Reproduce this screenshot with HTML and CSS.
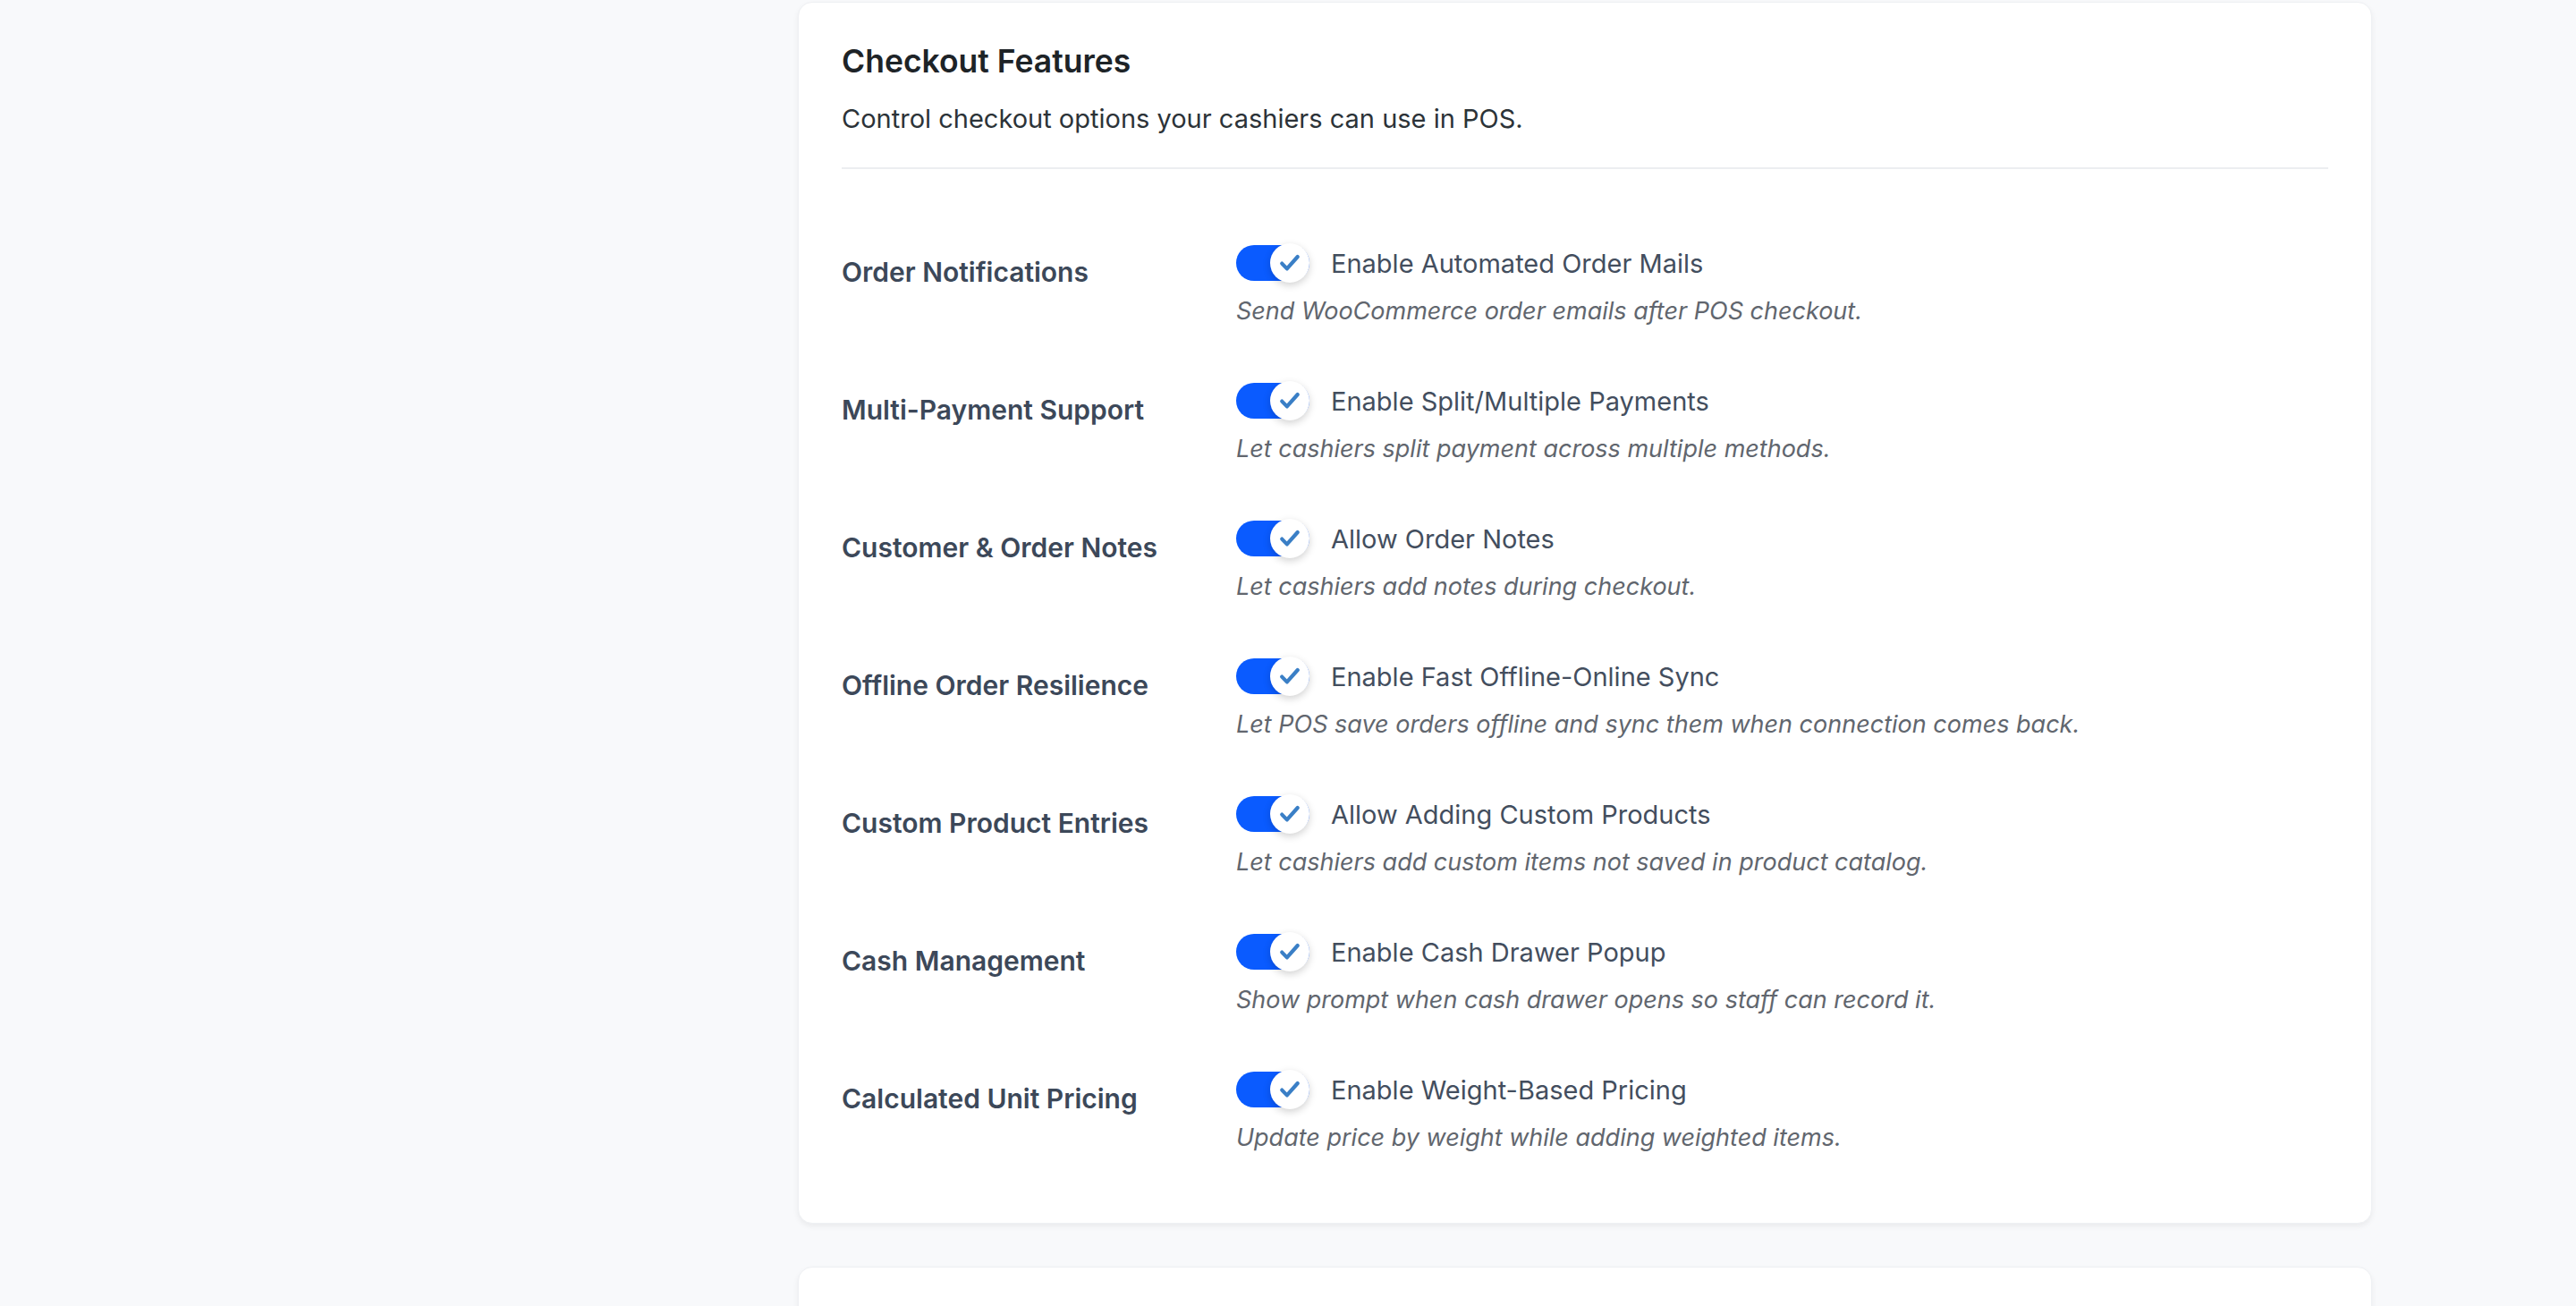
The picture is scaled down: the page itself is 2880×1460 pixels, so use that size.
FILE: index.html
```html
<!DOCTYPE html>
<html lang="en">
<head>
  <meta charset="UTF-8" />
  <meta name="viewport" content="width=device-width, initial-scale=1.0"/>
  <title>Checkout Features</title>
  <link rel="stylesheet" href="styles.css">
</head>
<body>
  <div class="main">
    <section class="card">
      <h2 class="card-title">Checkout Features</h2>
      <p class="card-desc">Control checkout options your cashiers can use in POS.</p>
      <hr class="divider" />

      <div class="rows">
        <div class="row">
          <div class="row-label">Order Notifications</div>
          <div class="row-field">
            <label class="switch-line">
              <span class="switch"><span class="knob"><svg viewBox="0 0 24 24"><path d="M4.5 12.5l4.8 5L19.5 6"/></svg></span></span>
              <span class="switch-text">Enable Automated Order Mails</span>
            </label>
            <p class="hint">Send WooCommerce order emails after POS checkout.</p>
          </div>
        </div>

        <div class="row">
          <div class="row-label">Multi-Payment Support</div>
          <div class="row-field">
            <label class="switch-line">
              <span class="switch"><span class="knob"><svg viewBox="0 0 24 24"><path d="M4.5 12.5l4.8 5L19.5 6"/></svg></span></span>
              <span class="switch-text">Enable Split/Multiple Payments</span>
            </label>
            <p class="hint">Let cashiers split payment across multiple methods.</p>
          </div>
        </div>

        <div class="row">
          <div class="row-label">Customer &amp; Order Notes</div>
          <div class="row-field">
            <label class="switch-line">
              <span class="switch"><span class="knob"><svg viewBox="0 0 24 24"><path d="M4.5 12.5l4.8 5L19.5 6"/></svg></span></span>
              <span class="switch-text">Allow Order Notes</span>
            </label>
            <p class="hint">Let cashiers add notes during checkout.</p>
          </div>
        </div>

        <div class="row">
          <div class="row-label">Offline Order Resilience</div>
          <div class="row-field">
            <label class="switch-line">
              <span class="switch"><span class="knob"><svg viewBox="0 0 24 24"><path d="M4.5 12.5l4.8 5L19.5 6"/></svg></span></span>
              <span class="switch-text">Enable Fast Offline-Online Sync</span>
            </label>
            <p class="hint">Let POS save orders offline and sync them when connection comes back.</p>
          </div>
        </div>

        <div class="row">
          <div class="row-label">Custom Product Entries</div>
          <div class="row-field">
            <label class="switch-line">
              <span class="switch"><span class="knob"><svg viewBox="0 0 24 24"><path d="M4.5 12.5l4.8 5L19.5 6"/></svg></span></span>
              <span class="switch-text">Allow Adding Custom Products</span>
            </label>
            <p class="hint">Let cashiers add custom items not saved in product catalog.</p>
          </div>
        </div>

        <div class="row">
          <div class="row-label">Cash Management</div>
          <div class="row-field">
            <label class="switch-line">
              <span class="switch"><span class="knob"><svg viewBox="0 0 24 24"><path d="M4.5 12.5l4.8 5L19.5 6"/></svg></span></span>
              <span class="switch-text">Enable Cash Drawer Popup</span>
            </label>
            <p class="hint">Show prompt when cash drawer opens so staff can record it.</p>
          </div>
        </div>

        <div class="row">
          <div class="row-label">Calculated Unit Pricing</div>
          <div class="row-field">
            <label class="switch-line">
              <span class="switch"><span class="knob"><svg viewBox="0 0 24 24"><path d="M4.5 12.5l4.8 5L19.5 6"/></svg></span></span>
              <span class="switch-text">Enable Weight-Based Pricing</span>
            </label>
            <p class="hint">Update price by weight while adding weighted items.</p>
          </div>
        </div>
      </div>
    </section>

    <section class="card card-next"></section>
  </div>
</body>
</html>
```

FILE: styles.css
```css
body {
  margin: 0;
  background-color: #f8f9fb;
  font-family: Inter, 'Noto Sans', sans-serif;
  overflow: hidden;
}

.main {
  width: 1760px;
  margin-left: 892px;
  padding-top: 2px;
  display: flex;
  flex-direction: column;
  gap: 48px;
}

.card {
  background: #ffffff;
  border: 1px solid #eef0f3;
  border-radius: 16px;
  padding: 41px 48px 46px;
  box-shadow: 0 3px 6px rgba(0,0,0,0.06);
}

.card-next {
  height: 200px;
}

.card-title {
  margin: 0;
  font-size: 35.5px;
  line-height: 50px;
  font-weight: 600;
  color: #1d2327;
}

.card-desc {
  margin: 17px 0 0;
  font-size: 29px;
  line-height: 44px;
  color: #2c3338;
}

.divider {
  margin: 32px 0 0;
  border: none;
  border-top: 2px solid #eceef1;
}

.rows {
  padding-top: 54px;
}

.row {
  display: grid;
  grid-template-columns: 441px 1fr;
  padding: 29px 0;
}

.row-label {
  padding-top: 10px;
  font-size: 30px;
  line-height: 44px;
  font-weight: 600;
  color: #3c4859;
}

.switch-line {
  display: flex;
  align-items: center;
  gap: 24px;
  height: 44px;
}

.switch {
  position: relative;
  width: 82px;
  height: 40px;
  border-radius: 20px;
  background: #0a5bff;
}

.knob {
  position: absolute;
  left: 38px;
  top: -2px;
  width: 44px;
  height: 44px;
  border-radius: 50%;
  background: #ffffff;
  box-shadow: 0 3px 8px rgba(0,0,0,0.18);
  display: flex;
  align-items: center;
  justify-content: center;
}

.knob svg {
  width: 28px;
  height: 28px;
  fill: none;
  stroke: #3a7fc6;
  stroke-width: 3.6;
  stroke-linecap: round;
  stroke-linejoin: round;
}

.switch-text {
  font-size: 29px;
  color: #434e5e;
}

.hint {
  margin: 12px 0 0;
  font-size: 27px;
  line-height: 40px;
  font-style: italic;
  color: #61666e;
}
```
